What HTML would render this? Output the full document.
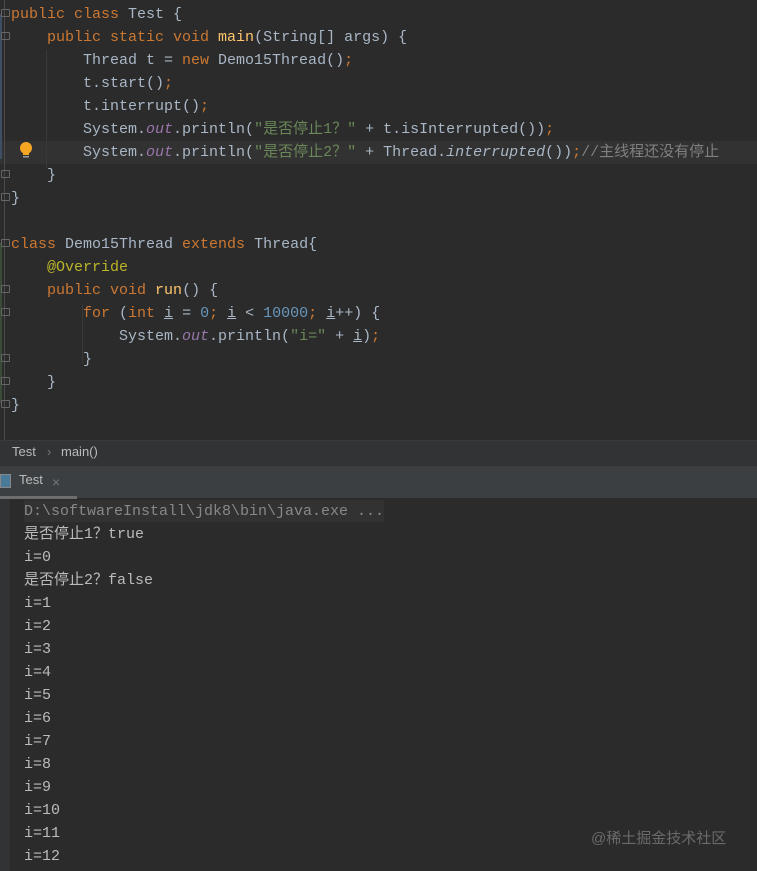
<!DOCTYPE html>
<html><head><meta charset="utf-8"><style>
body{margin:0;width:757px;height:871px;background:#2b2b2b;overflow:hidden;position:relative;font-family:"Liberation Mono","Noto Sans CJK SC",monospace;font-size:15px;color:#a9b7c6}
.l{position:absolute;left:11px;height:23px;line-height:23px;white-space:pre}
.k{color:#cc7832}.f{color:#ffc66d}.s{color:#6a8759}.n{color:#6897bb}.o{color:#9876aa;font-style:italic}.a{color:#bbb529}.c{color:#808080}.it{font-style:italic}.u{text-decoration:underline}
.hl{position:absolute;left:0;top:141px;width:757px;height:23px;background:#323232}
.fold{position:absolute;left:1px;width:7px;height:6px;border:1px solid #666;border-radius:1px}
.cl{position:absolute;left:24px;height:23px;line-height:23px;white-space:pre;color:#bbb}
</style></head><body>
<div class="hl"></div>
<div style="position:absolute;left:0;top:14px;width:2px;height:145px;background:#3d4f63"></div>
<div style="position:absolute;left:0;top:243px;width:2px;height:160px;background:#384c38"></div>
<div style="position:absolute;left:4px;top:0;width:1px;height:440px;background:#4a4a4a"></div>
<div style="position:absolute;left:46px;top:50px;width:1px;height:118px;background:#393939"></div>
<div style="position:absolute;left:82px;top:303px;width:1px;height:60px;background:#393939"></div>
<div class="fold" style="top:9px"></div><div class="fold" style="top:32px"></div><div class="fold" style="top:170px"></div><div class="fold" style="top:193px"></div>
<div class="fold" style="top:239px"></div><div class="fold" style="top:285px"></div><div class="fold" style="top:308px"></div><div class="fold" style="top:354px"></div><div class="fold" style="top:377px"></div><div class="fold" style="top:400px"></div>
<svg style="position:absolute;left:18px;top:141px" width="16" height="20"><circle cx="8" cy="7" r="6" fill="#f5a623"/><rect x="5" y="12" width="6" height="2" fill="#f5a623"/><rect x="5" y="15" width="6" height="1.5" fill="#999"/></svg>
<div class="l" style="top:3px"><span class="k">public class </span>Test {</div>
<div class="l" style="top:26px">    <span class="k">public static void </span><span class="f">main</span>(String[] args) {</div>
<div class="l" style="top:49px">        Thread t = <span class="k">new </span>Demo15Thread()<span class="k">;</span></div>
<div class="l" style="top:72px">        t.start()<span class="k">;</span></div>
<div class="l" style="top:95px">        t.interrupt()<span class="k">;</span></div>
<div class="l" style="top:118px">        System.<span class="o">out</span>.println(<span class="s">"是否停止1？"</span> + t.isInterrupted())<span class="k">;</span></div>
<div class="l" style="top:141px">        System.<span class="o">out</span>.println(<span class="s">"是否停止2？"</span> + Thread.<span class="it">interrupted</span>())<span class="k">;</span><span class="c">//主线程还没有停止</span></div>
<div class="l" style="top:164px">    }</div>
<div class="l" style="top:187px">}</div>
<div class="l" style="top:233px"><span class="k">class </span>Demo15Thread <span class="k">extends </span>Thread{</div>
<div class="l" style="top:256px">    <span class="a">@Override</span></div>
<div class="l" style="top:279px">    <span class="k">public void </span><span class="f">run</span>() {</div>
<div class="l" style="top:302px">        <span class="k">for </span>(<span class="k">int </span><span class="u">i</span> = <span class="n">0</span><span class="k">; </span><span class="u">i</span> &lt; <span class="n">10000</span><span class="k">; </span><span class="u">i</span>++) {</div>
<div class="l" style="top:325px">            System.<span class="o">out</span>.println(<span class="s">"i="</span> + <span class="u">i</span>)<span class="k">;</span></div>
<div class="l" style="top:348px">        }</div>
<div class="l" style="top:371px">    }</div>
<div class="l" style="top:394px">}</div>
<div style="position:absolute;left:0;top:440px;width:757px;height:24px;background:#313335;border-top:1px solid #3a3a3a;font-family:'Liberation Sans',sans-serif;font-size:13px;color:#bbb;line-height:22px"><span style="position:absolute;left:12px">Test</span><span style="position:absolute;left:47px;color:#777">›</span><span style="position:absolute;left:61px">main()</span></div>
<div style="position:absolute;left:0;top:465px;width:757px;height:32px;background:#3c3f41;border-top:1px solid #323232"></div>
<div style="position:absolute;left:0;top:496px;width:77px;height:3px;background:#6e6e6e"></div>
<div style="position:absolute;left:0;top:474px;width:11px;height:14px;border:1px solid #888;background:#4a7a9a;box-sizing:border-box"></div>
<div style="position:absolute;left:19px;top:472px;font-family:'Liberation Sans',sans-serif;font-size:13px;color:#bbb">Test</div>
<div style="position:absolute;left:52px;top:474px;color:#777;font-family:'Liberation Sans',sans-serif;font-size:14px">×</div>
<div style="position:absolute;left:0;top:499px;width:10px;height:372px;background:#313335"></div>
<div style="position:absolute;left:24px;top:500px;width:360px;height:22px;background:#323232"></div>
<div class="cl" style="top:500px;color:#888">D:\softwareInstall\jdk8\bin\java.exe ...</div>
<div class="cl" style="top:523px">是否停止1？true</div>
<div class="cl" style="top:546px">i=0</div>
<div class="cl" style="top:569px">是否停止2？false</div>
<div class="cl" style="top:592px">i=1</div>
<div class="cl" style="top:615px">i=2</div>
<div class="cl" style="top:638px">i=3</div>
<div class="cl" style="top:661px">i=4</div>
<div class="cl" style="top:684px">i=5</div>
<div class="cl" style="top:707px">i=6</div>
<div class="cl" style="top:730px">i=7</div>
<div class="cl" style="top:753px">i=8</div>
<div class="cl" style="top:776px">i=9</div>
<div class="cl" style="top:799px">i=10</div>
<div class="cl" style="top:822px">i=11</div>
<div class="cl" style="top:845px">i=12</div>
<div style="position:absolute;left:591px;top:827px;font-family:'Liberation Sans','Noto Sans CJK SC',sans-serif;font-size:15px;color:#6a6a6a">@稀土掘金技术社区</div>
</body></html>
